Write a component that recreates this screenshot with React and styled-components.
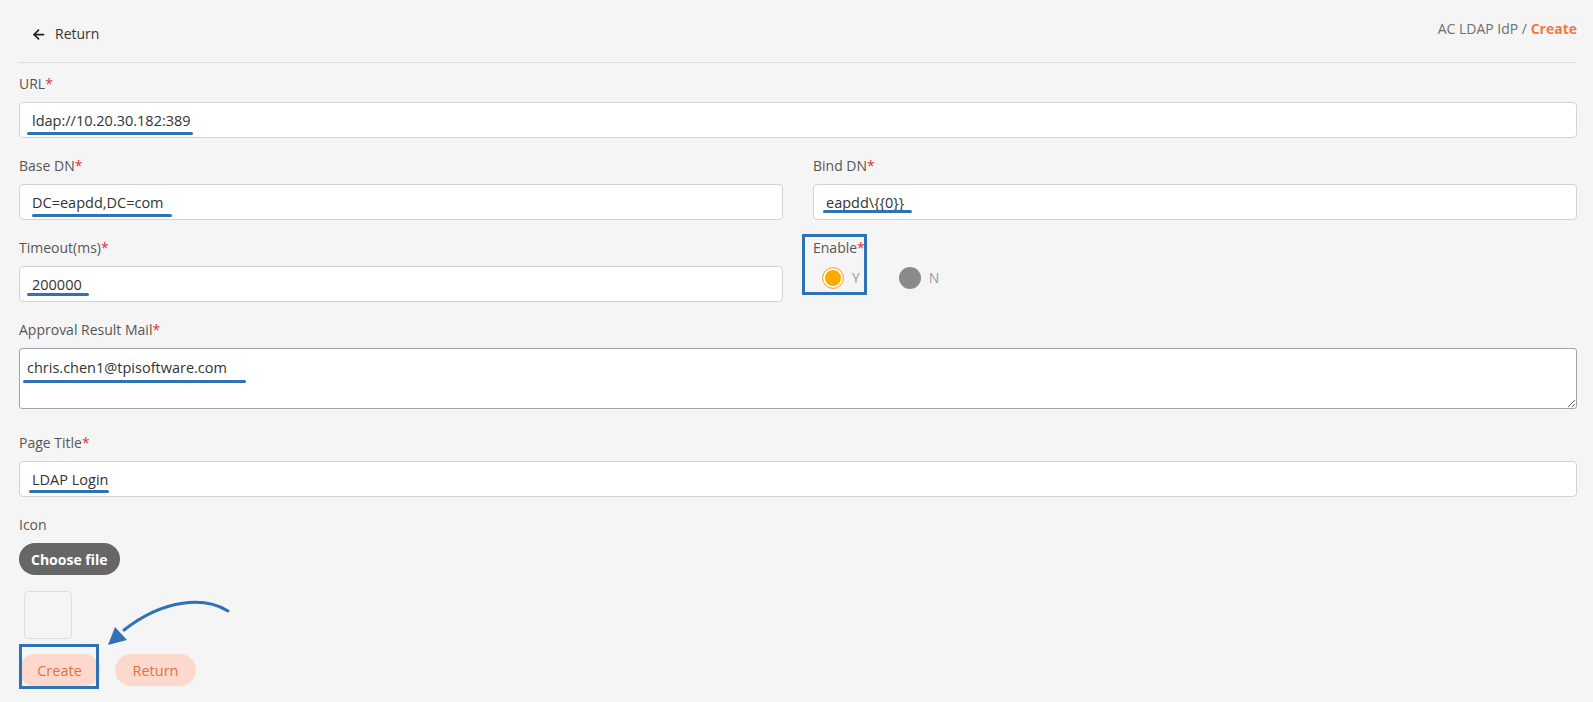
import React from "react";
import styled, { createGlobalStyle } from "styled-components";

const Global = createGlobalStyle`
  html, body { margin: 0; padding: 0; background: #f5f5f5; }
  body { font-family: "Open Sans", "Liberation Sans", sans-serif; font-size: 14px; color: #333; }
  * { box-sizing: border-box; }
`;

const Page = styled.div`
  position: relative;
  padding: 0 16px 0 19px;
  min-height: 702px;
`;

const Header = styled.div`
  height: 63px;
  border-bottom: 1px solid #dcdcdc;
  display: flex;
  justify-content: space-between;
  align-items: flex-start;
`;

const BackLink = styled.div`
  margin-top: 24px;
  margin-left: 12px;
  display: flex;
  align-items: center;
  gap: 9px;
  line-height: 20px;
  color: #333;
  cursor: pointer;
`;

const Crumbs = styled.div`
  margin-top: 19px;
  line-height: 20px;
  color: #6f6f6f;
`;

const CrumbActive = styled.span`
  color: #ef7a43;
  font-weight: 700;
`;

const Form = styled.div`
  display: flex;
  flex-direction: column;
  gap: 18px;
  padding-top: 11px;
`;

const Row = styled.div`
  display: grid;
  grid-template-columns: 1fr 1fr;
  column-gap: 30px;
`;

const Group = styled.div`
  position: relative;
  display: flex;
  flex-direction: column;
  align-items: stretch;
`;

const Label = styled.div`
  line-height: 20px;
  color: #555;
  margin-bottom: 8px;
`;

const Star = styled.span`
  color: #e23232;
`;

const FieldWrap = styled.div`
  position: relative;
`;

const Input = styled.input`
  display: block;
  width: 100%;
  height: 36px;
  padding: 0 12px;
  border: 1px solid #d2d2d2;
  border-radius: 4px;
  background: #fff;
  font-family: inherit;
  font-size: 14.5px;
  color: #333;
  outline: none;
`;

const TextArea = styled.textarea`
  display: block;
  width: 100%;
  height: 61px;
  padding: 9px 7px;
  margin-bottom: 6px;
  border: 1px solid #a3a3a3;
  border-radius: 3px;
  background: #fff;
  font-family: inherit;
  font-size: 14.5px;
  line-height: 20px;
  color: #333;
  outline: none;
  resize: vertical;
`;

const Underline = styled.span`
  position: absolute;
  height: 3px;
  border-radius: 2px;
  background: #2f72b5;
  pointer-events: none;
`;

const RadioRow = styled.div`
  display: flex;
  align-items: center;
  padding-left: 9px;
  height: 24px;
`;

const RadioItem = styled.label`
  display: flex;
  align-items: center;
  gap: 8px;
  margin-right: 39px;
  color: #9a9a9a;
  line-height: 20px;
`;

const RadioDot = styled.span`
  width: 22px;
  height: 22px;
  border-radius: 50%;
  flex: none;
  ${(p) =>
    p.$checked
      ? `border: 1.5px solid #f4b53a; background: #ffaa00; box-shadow: inset 0 0 0 2px #fff;`
      : `background: #8a8a8a;`}
`;

const NoteBox = styled.div`
  position: absolute;
  border: 3px solid #2f72b5;
  pointer-events: none;
`;

const FileButton = styled.button`
  align-self: flex-start;
  height: 32px;
  padding: 0 12px;
  border: none;
  border-radius: 16px;
  background: #666;
  color: #fff;
  font-family: inherit;
  font-size: 14px;
  font-weight: 700;
`;

const Preview = styled.div`
  margin-top: 16px;
  margin-left: 5px;
  width: 48px;
  height: 48px;
  border: 1px solid #dedede;
  border-radius: 4px;
`;

const Actions = styled.div`
  position: relative;
  display: flex;
  gap: 15px;
  margin-top: 15px;
`;

const PillButton = styled.button`
  height: 32px;
  width: 81px;
  border: none;
  border-radius: 16px;
  background: #fcd9cc;
  color: #e36f48;
  font-family: inherit;
  font-size: 14.5px;
`;

const ArrowSvg = styled.svg`
  position: absolute;
  left: 100px;
  top: 595px;
  overflow: visible;
  pointer-events: none;
`;

function TextField({ label, value, line }) {
  return (
    <Group>
      <Label>
        {label}
        <Star>*</Star>
      </Label>
      <FieldWrap>
        <Input readOnly value={value} />
        <Underline style={{ left: line[0], top: line[1], width: line[2] }} />
      </FieldWrap>
    </Group>
  );
}

export default function App() {
  return (
    <>
      <Global />
      <Page>
        <Header>
          <BackLink>
            <svg width="15" height="15" viewBox="0 0 24 24" fill="none" stroke="#222" strokeWidth="2.8" strokeLinecap="round" strokeLinejoin="round">
              <path d="M20 12H5" />
              <path d="M12 19l-7-7 7-7" />
            </svg>
            Return
          </BackLink>
          <Crumbs>
            AC LDAP IdP / <CrumbActive>Create</CrumbActive>
          </Crumbs>
        </Header>
        <Form>
          <TextField label="URL" value="ldap://10.20.30.182:389" line={[8, 30, 166]} />
          <Row>
            <TextField label="Base DN" value="DC=eapdd,DC=com" line={[13, 30, 140]} />
            <TextField label="Bind DN" value="eapdd\{{0}}" line={[10, 26, 89]} />
          </Row>
          <Row>
            <TextField label="Timeout(ms)" value="200000" line={[8, 27, 62]} />
            <Group>
              <Label>
                Enable<Star>*</Star>
              </Label>
              <RadioRow>
                <RadioItem>
                  <RadioDot $checked />Y
                </RadioItem>
                <RadioItem>
                  <RadioDot />N
                </RadioItem>
              </RadioRow>
              <NoteBox style={{ left: -11, top: -4, width: 65, height: 61 }} />
            </Group>
          </Row>
          <Group>
            <Label>
              Approval Result Mail<Star>*</Star>
            </Label>
            <FieldWrap>
              <TextArea readOnly value="chris.chen1@tpisoftware.com" />
              <Underline style={{ left: 4, top: 32, width: 223 }} />
            </FieldWrap>
          </Group>
          <TextField label="Page Title" value="LDAP Login" line={[10, 29, 80]} />
          <Group>
            <Label>Icon</Label>
            <FileButton>Choose file</FileButton>
            <Preview />
            <Actions>
              <PillButton>Create</PillButton>
              <PillButton>Return</PillButton>
              <NoteBox style={{ left: 0, top: -10, width: 80, height: 45 }} />
            </Actions>
          </Group>
        </Form>
        <ArrowSvg width="135" height="55" viewBox="0 0 135 55">
          <path d="M128 16 C105 2, 65 3, 24 35" fill="none" stroke="#2f72b5" strokeWidth="3" strokeLinecap="round" />
          <path d="M8 50 L15 32 L27 45 Z" fill="#2f72b5" />
        </ArrowSvg>
      </Page>
    </>
  );
}
